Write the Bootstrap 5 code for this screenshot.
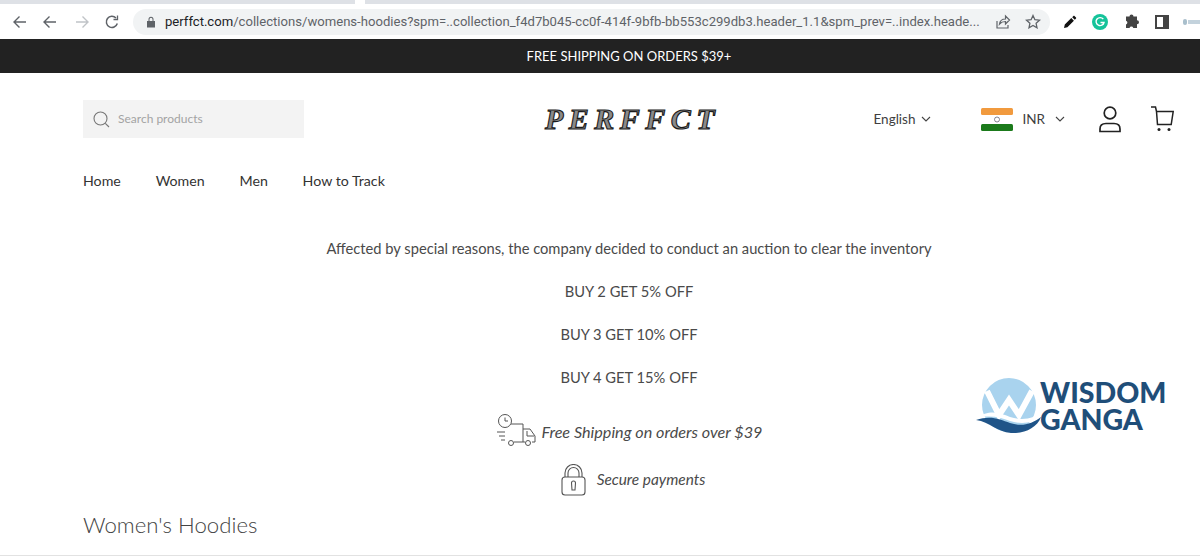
<!DOCTYPE html>
<html lang="en">

<head>
    <meta charset="UTF-8">
    <meta name="viewport" content="width=device-width, initial-scale=1.0">
    <title>Women's Hoodies</title>
    <link href="https://cdn.jsdelivr.net/npm/bootstrap@5.3.2/dist/css/bootstrap.min.css" rel="stylesheet">
    <style>
        html, body { height: 557px; overflow: hidden; }
        body {
            position: relative;
            font-family: "Lato", "Liberation Sans", sans-serif;
            color: #3f3f3f;
            background: #fff;
        }

        /* browser chrome */
        .tab-sliver { height: 4px; background: #fff; gap: 10px; }
        .tab-sliver div { height: 4px; background: #dee1e6; }
        .sliver-a { width: 355px; }
        .sliver-b { flex: 1 1 auto; }
        .tool-row { height: 35px; padding-left: 12px; }
        .tool-btn { flex: 0 0 auto; display: block; }
        .gap-14 { margin-right: 14px; }
        .gap-16 { margin-right: 16px; }
        .addr-pill {
            width: 919px;
            height: 26px;
            margin-left: 13px;
            background: #f1f3f4;
            border-radius: 13px;
            padding: 0 9px 0 13px;
        }
        .addr-url {
            font-family: "Roboto", "Liberation Sans", sans-serif;
            font-size: 13.1px;
            color: #5f6368;
            white-space: nowrap;
            margin-left: 9px;
            flex: 1 1 auto;
            min-width: 0;
        }
        .addr-url b { font-weight: 400; color: #202124; }
        .star-btn { margin-left: 14px; }
        .pen-btn { margin-left: 13px; }
        .g-btn { margin-left: 15px; }
        .puzzle-btn { margin-left: 16px; }
        .panel-btn { margin-left: 16px; }
        .ext-btn { margin-left: 14px; }

        /* promo */
        .promo-bar {
            height: 34px;
            background: #222;
            color: #fff;
            font-size: 13px;
            padding: 1px 0 0 58px;
        }

        /* shop header */
        .shop-wrap { padding: 0 25px 0 83px; }
        .top-row { height: 92px; }
        .side-slot { flex: 1 1 0; min-width: 0; }
        .search-box {
            width: 221px;
            height: 38px;
            background: #f3f3f3;
            padding-left: 10px;
            font-size: 12px;
            color: #a3a3a3;
        }
        .brand-word {
            font-family: "Liberation Serif", serif;
            font-style: italic;
            font-weight: 700;
            font-size: 30px;
            letter-spacing: 5.500px;
            color: #8a8a8a;
            -webkit-text-stroke: 1.1px #1a1a1a;
            line-height: 1;
            margin-left: 8px;
        }
        .tools-slot { font-size: 13.5px; padding-right: 1px; }
        .flag-mark { width: 32px; height: 23px; display: block; margin-left: 50px; }
        .inr-label { margin-left: 9px; }
        .inr-chev { margin-left: 10px; }
        .chev-first { margin-left: 6px; }
        .user-btn { margin-left: 33px; }
        .cart-btn { margin-left: 29px; }
        .menu-row { height: 32px; gap: 34.800px; font-size: 14.2px; color: #333; }

        /* notice text */
        .notice-area { text-align: center; padding-top: 40px; font-size: 14.7px; color: #4a4a4a; }
        .notice-line { height: 43px; line-height: 22px; }
        .perk-ship { height: 48px; font-style: italic; font-size: 16.2px; margin-top: -1px; }
        .perk-safe { height: 48px; font-style: italic; font-size: 15.400px; gap: 11px; padding-left: 8px; }
        .section-title { font-size: 22.200px; font-weight: 300; color: #444; margin: 0; padding-top: 7px; line-height: 28px; }
        .foot-line {
            position: absolute;
            left: 0;
            right: 0;
            top: 555px;
            border-top: 1px solid #e2e2e2;
        }

        /* watermark */
        .wisdom-mark { position: absolute; left: 976px; top: 377px; }
        .wisdom-text {
            font-family: "Lato", "Liberation Sans", sans-serif;
            font-weight: 900;
            color: #1f4e79;
            font-size: 28.500px;
            line-height: 27px;
            margin-left: -4px;
            margin-top: -1px;
        }
    </style>
</head>

<body>
    <!-- browser chrome -->
    <div class="tab-sliver d-flex"><div class="sliver-a"></div><div class="sliver-b"></div></div>
    <div class="tool-row d-flex align-items-center">
        <svg class="tool-btn gap-14" width="16" height="16" viewBox="0 0 16 16" fill="none" stroke="#5f6368" stroke-width="1.400"><path d="M14 8H2M7.500 2.500 2 8l5.500 5.500"/></svg>
        <svg class="tool-btn gap-16" width="16" height="16" viewBox="0 0 16 16" fill="none" stroke="#5f6368" stroke-width="1.400"><path d="M14 8H2M7.500 2.500 2 8l5.500 5.500"/></svg>
        <svg class="tool-btn gap-14" width="16" height="16" viewBox="0 0 16 16" fill="none" stroke="#c0c3c7" stroke-width="1.400"><path d="M2 8h12M8.500 2.500 14 8l-5.500 5.500"/></svg>
        <svg class="tool-btn" width="16" height="16" viewBox="0 0 16 16" fill="none" stroke="#5f6368" stroke-width="1.500"><path d="M13.300 9.500A5.600 5.600 0 1 1 12 4"/><path d="M13.500 1.500v4h-4" stroke-width="1.300"/></svg>
        <div class="addr-pill d-flex align-items-center">
            <svg class="flex-shrink-0" width="10" height="12" viewBox="0 0 10 12"><path fill="#5f6368" d="M1 5h8v6.500H1zM2.500 5V3.300a2.500 2.500 0 0 1 5 0V5H6.500V3.300a1.500 1.500 0 0 0-3 0V5z"/></svg>
            <span class="addr-url"><b>perffct.com</b>/collections/womens-hoodies?spm=..collection_f4d7b045-cc0f-414f-9bfb-bb553c299db3.header_1.1&amp;spm_prev=..index.heade...</span>
            <svg class="flex-shrink-0" width="17" height="15" viewBox="0 0 17 15" fill="none" stroke="#5f6368" stroke-width="1.200"><path d="M3 7v7h11v-3M5.500 10c.5-3.500 3-5 6-5V2l4 4-4 4V7.500c-2.500 0-4.500.7-6 2.500z"/></svg>
            <svg class="star-btn flex-shrink-0" width="16" height="15" viewBox="0 0 16 15" fill="none" stroke="#5f6368" stroke-width="1.300"><path d="M8 1.500 9.900 5.700l4.600.5-3.400 3.100.9 4.500L8 11.500l-4 2.300.9-4.500L1.500 6.200l4.600-.5z"/></svg>
        </div>
        <svg class="pen-btn tool-btn" width="14" height="14" viewBox="0 0 14 14"><path fill="#111" d="M1 13l.8-3.400 6.500-6.500 2.600 2.600-6.500 6.500zM9.200 2.200l1.200-1.200c.3-.3.8-.3 1.100 0l1.500 1.500c.3.300.3.800 0 1.100l-1.200 1.200z"/></svg>
        <svg class="g-btn tool-btn" width="16" height="16" viewBox="0 0 16 16"><circle cx="8" cy="8" r="8" fill="#15c39a"/><path d="M11.300 5.200A4 4 0 1 0 12 8.500H8.500" fill="none" stroke="#fff" stroke-width="1.400"/></svg>
        <svg class="puzzle-btn tool-btn" width="15" height="15" viewBox="0 0 15 15"><path fill="#444" d="M5.500 2.500a2 2 0 0 1 4 0H13v3.700a2 2 0 0 1 0 4V14H9.300a2 2 0 0 0-3.800 0H2v-3.500a2 2 0 0 0 0-3.800V2.500z"/></svg>
        <svg class="panel-btn tool-btn" width="14" height="14" viewBox="0 0 14 14"><path fill="#444" fill-rule="evenodd" d="M0 0h14v14H0zM2 2v10h6V2z"/></svg>
        <svg class="ext-btn tool-btn" width="17" height="8" viewBox="0 0 17 8"><rect y="1" width="4" height="6" rx="2" fill="#a9bfcc"/><rect x="5" y="2" width="12" height="4" fill="#c3d2dc"/></svg>
    </div>

    <div class="promo-bar d-flex align-items-center justify-content-center">FREE SHIPPING ON ORDERS $39+</div>

    <div class="shop-wrap">
        <div class="top-row d-flex align-items-center">
            <div class="side-slot">
                <div class="search-box d-flex align-items-center">
                    <svg class="me-2" width="17" height="17" viewBox="0 0 17 17" fill="none" stroke="#777" stroke-width="1.100"><circle cx="7.500" cy="7.500" r="6.500"/><path d="M12.300 12.300 16 16"/></svg>
                    Search products
                </div>
            </div>
            <div class="text-center"><span class="brand-word">PERFFCT</span></div>
            <div class="side-slot tools-slot d-flex align-items-center justify-content-end">
                <span>English</span>
                <svg class="chev-first" width="10" height="6" viewBox="0 0 10 6" fill="none" stroke="#444" stroke-width="1.100"><path d="M1 1l4 4 4-4"/></svg>
                <svg class="flag-mark" viewBox="0 0 32 23"><rect width="32" height="7" rx="1.500" fill="#f19a3e"/><rect y="7" width="32" height="9" fill="#fff"/><rect y="16" width="32" height="7" rx="1.500" fill="#1b7a1b"/><circle cx="16" cy="11.500" r="2.500" fill="none" stroke="#667" stroke-width=".8"/></svg>
                <span class="inr-label">INR</span>
                <svg class="inr-chev" width="10" height="6" viewBox="0 0 10 6" fill="none" stroke="#444" stroke-width="1.100"><path d="M1 1l4 4 4-4"/></svg>
                <svg class="user-btn" width="24" height="27" viewBox="0 0 24 27" fill="none" stroke="#222" stroke-width="1.700"><circle cx="12" cy="7" r="5.800"/><path d="M2 25.500v-2.500c0-3.500 2.500-5.500 6-5.500h8c3.500 0 6 2 6 5.500v2.500z"/></svg>
                <svg class="cart-btn" width="23" height="26" viewBox="0 0 23 26" fill="none" stroke="#222" stroke-width="1.500"><path d="M0 1h4.500l1 4.500M5.500 5.500H22.200l-2 13H6.500l-1-13"/><circle cx="8" cy="23.500" r="1.500" fill="#222" stroke="none"/><circle cx="18" cy="23.500" r="1.500" fill="#222" stroke="none"/></svg>
            </div>
        </div>

        <div class="menu-row d-flex align-items-center">
            <span>Home</span><span>Women</span><span>Men</span><span>How to Track</span>
        </div>

        <div class="notice-area">
            <div class="notice-line">Affected by special reasons, the company decided to conduct an auction to clear the inventory</div>
            <div class="notice-line">BUY 2 GET 5% OFF</div>
            <div class="notice-line">BUY 3 GET 10% OFF</div>
            <div class="notice-line">BUY 4 GET 15% OFF</div>
            <div class="perk-ship d-flex align-items-center justify-content-center gap-1">
                <svg width="42" height="36" viewBox="0 0 42 36" fill="none" stroke="#555" stroke-width="1"><circle cx="9" cy="7" r="6.500"/><path d="M9 3.500V7h3"/><path d="M15 10h12v18H18M27 15h7l5 7v6h-3M27 28h2M1 18h8M3 22h6M5 26h4"/><circle cx="15" cy="29" r="2.500"/><circle cx="32" cy="29" r="2.500"/><path d="M31 17v5h7"/></svg>
                <span>Free Shipping on orders over $39</span>
            </div>
            <div class="perk-safe d-flex align-items-center justify-content-center">
                <svg width="25" height="32" viewBox="0 0 25 32" fill="none" stroke="#555" stroke-width="1.100"><rect x="1" y="13" width="23" height="18" rx="3"/><path d="M4 13V9a8.500 8.500 0 0 1 17 0v4M7 13V9a5.500 5.500 0 0 1 11 0v4"/><path d="M10.500 19a2 2 0 0 1 4 0l-.5 7h-3z"/></svg>
                <span>Secure payments</span>
            </div>
        </div>

        <h1 class="section-title">Women's Hoodies</h1>
    </div>

    <div class="foot-line"></div>

    <!-- watermark over the page -->
    <div class="wisdom-mark d-flex align-items-center">
        <svg width="68" height="58" viewBox="0 0 68 58">
            <circle cx="33" cy="28" r="27" fill="#a9d3ee"/>
            <path d="M11 14l12 24 10-15 10 15 13-24" fill="none" stroke="#fff" stroke-width="6"/>
            <path d="M0 41c14-9 24-5 34-1 12 4 24 2 34-6v4c-10 8-22 10-34 6-10-4-20-6-34-3z" fill="#fff"/>
            <path d="M0 43c14-5 24-1 34 3 12 4 22 1 31-6-4 11-17 17-30 16C21 55 14 45 0 43z" fill="#1f5488"/>
        </svg>
        <div class="wisdom-text">WISDOM<br>GANGA</div>
    </div>

    <script src="https://cdn.jsdelivr.net/npm/bootstrap@5.3.2/dist/js/bootstrap.bundle.min.js"></script>
</body>

</html>
